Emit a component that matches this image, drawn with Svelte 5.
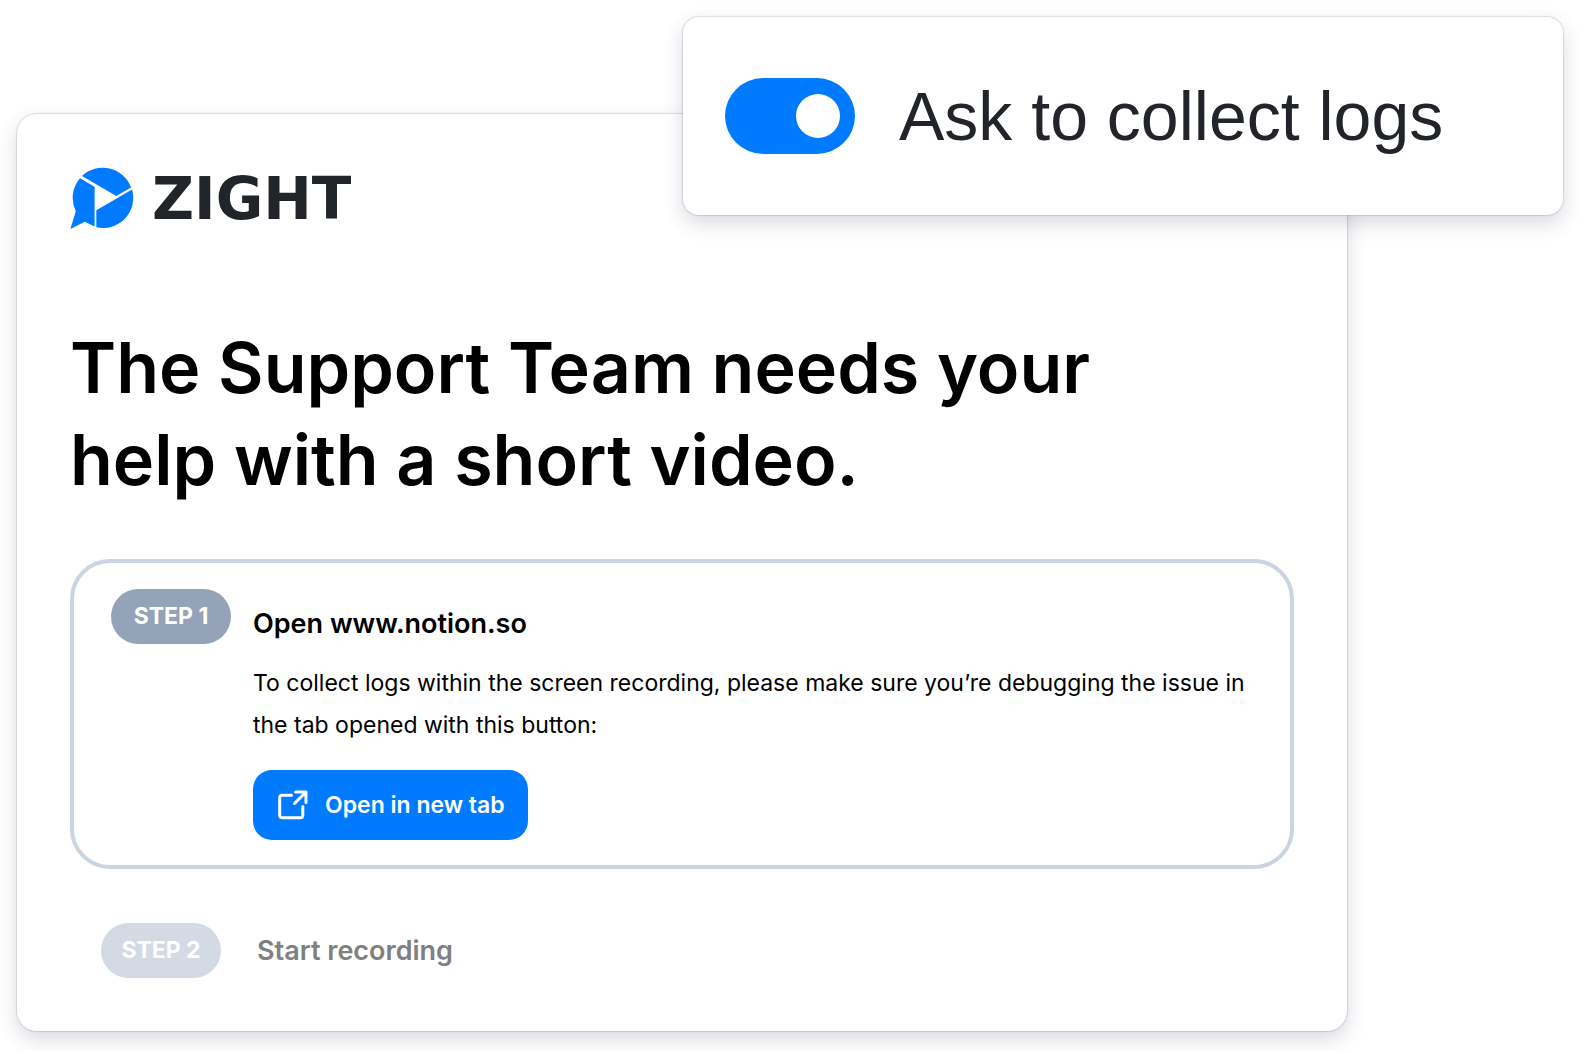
<script lang="ts">
  let collectLogs = $state(true);
</script>

<main class="scene">
  <section class="card">
    <div class="brand">
      <svg class="mark" viewBox="0 0 64 64" aria-hidden="true">
        <path d="M12 9A30.2 30.2 0 0 1 61 20.4L46.3 29Z" />
        <path d="M10 11.2L24.6 19.8V59.6L14.8 54.8L0.4 62L5.8 44.3A30.2 30.2 0 0 1 10 11.2Z" />
        <path d="M62.1 22.6A30.2 30.2 0 0 1 26.3 60.3V43.2Z" />
      </svg>
      <span class="wordmark">ZIGHT</span>
    </div>

    <h1>The Support Team needs your help with a short video.</h1>

    <article class="step active">
      <span class="pill">STEP 1</span>
      <div class="body">
        <h2>Open www.notion.so</h2>
        <p>
          To collect logs within the screen recording, please make sure you’re debugging the issue in
          the tab opened with this button:
        </p>
        <button type="button">
          <svg class="icon" viewBox="0 0 30 30" aria-hidden="true">
            <path d="M13.5 5.2H4.2Q1.7 5.2 1.7 7.7V25.3Q1.7 27.8 4.2 27.8H22.3Q24.8 27.8 24.8 25.3V16.5" />
            <path d="M17.5 2H28V12.5M28 2L16.5 13.5" />
          </svg>
          Open in new tab
        </button>
      </div>
    </article>

    <article class="step pending">
      <span class="pill">STEP 2</span>
      <h2>Start recording</h2>
    </article>
  </section>

  <label class="popup">
    <input type="checkbox" role="switch" bind:checked={collectLogs} />
    <span>Ask to collect logs</span>
  </label>
</main>

<style>
  :global(body) {
    margin: 0;
    background: #fff;
  }

  .scene {
    position: relative;
    box-sizing: border-box;
    padding: 114px 240px 20px 17px;
    font-family: Inter, "Liberation Sans", sans-serif;
    color: #000;
  }

  .card,
  .popup {
    background: #fff;
    box-shadow:
      0 0 1px 1px rgba(40, 50, 90, 0.14),
      0 8px 20px rgba(40, 50, 90, 0.18);
  }

  .card {
    box-sizing: border-box;
    padding: 53px;
    border-radius: 20px;
  }

  .brand {
    display: flex;
    align-items: center;
    gap: 18px;
    height: 64px;
  }

  .mark {
    width: 64px;
    height: 64px;
    fill: #007bff;
  }

  .wordmark {
    font: bold 58px/64px "DejaVu Sans", sans-serif;
    color: #212429;
  }

  h1 {
    max-width: 1060px;
    margin: 91px 0 0;
    font-size: 70px;
    line-height: 92px;
    font-weight: 600;
  }

  .step {
    display: flex;
  }

  .active {
    gap: 22px;
    margin-top: 53px;
    padding: 26px 36px 25px 37px;
    border: 4px solid #cbd5e1;
    border-radius: 40px;
  }

  .pill {
    flex: none;
    width: 120px;
    height: 55px;
    border-radius: 28px;
    background: #94a3b8;
    color: #fff;
    font-size: 23px;
    line-height: 55px;
    font-weight: 700;
    text-align: center;
  }

  .body {
    flex: 1;
    padding-top: 16px;
  }

  h2 {
    margin: 0;
    font-size: 27px;
    line-height: 38px;
    font-weight: 600;
  }

  p {
    margin: 19px 0 24px;
    font-size: 23px;
    line-height: 42px;
  }

  button {
    display: flex;
    align-items: center;
    gap: 17px;
    height: 70px;
    padding: 0 23px 0 25px;
    border: 0;
    border-radius: 19px;
    background: #007bff;
    color: #fff;
    font: 600 23px/28px Inter, "Liberation Sans", sans-serif;
    cursor: pointer;
  }

  .icon {
    width: 30px;
    height: 30px;
    fill: none;
    stroke: #fff;
    stroke-width: 3;
    stroke-linecap: round;
    stroke-linejoin: round;
  }

  .pending {
    align-items: center;
    gap: 36px;
    margin-top: 54px;
    padding-left: 31px;
    color: #808080;
  }

  .pending .pill {
    background: #d4dae4;
  }

  .popup {
    position: absolute;
    top: 17px;
    right: 24px;
    display: flex;
    align-items: center;
    gap: 44px;
    box-sizing: border-box;
    width: 880px;
    height: 198px;
    padding: 0 42px;
    border-radius: 16px;
    color: #212429;
    font-family: "Liberation Sans", Arial, sans-serif;
    font-size: 68px;
    line-height: 90px;
    white-space: nowrap;
    cursor: pointer;
  }

  input {
    flex: none;
    display: flex;
    align-items: center;
    box-sizing: border-box;
    width: 130px;
    height: 76px;
    margin: 0;
    padding: 0 15px;
    border-radius: 38px;
    background: #94a3b8;
    appearance: none;
    cursor: pointer;
  }

  input::before {
    content: "";
    width: 44px;
    height: 44px;
    border-radius: 50%;
    background: #fff;
  }

  input:checked {
    justify-content: flex-end;
    background: #007bff;
  }
</style>
